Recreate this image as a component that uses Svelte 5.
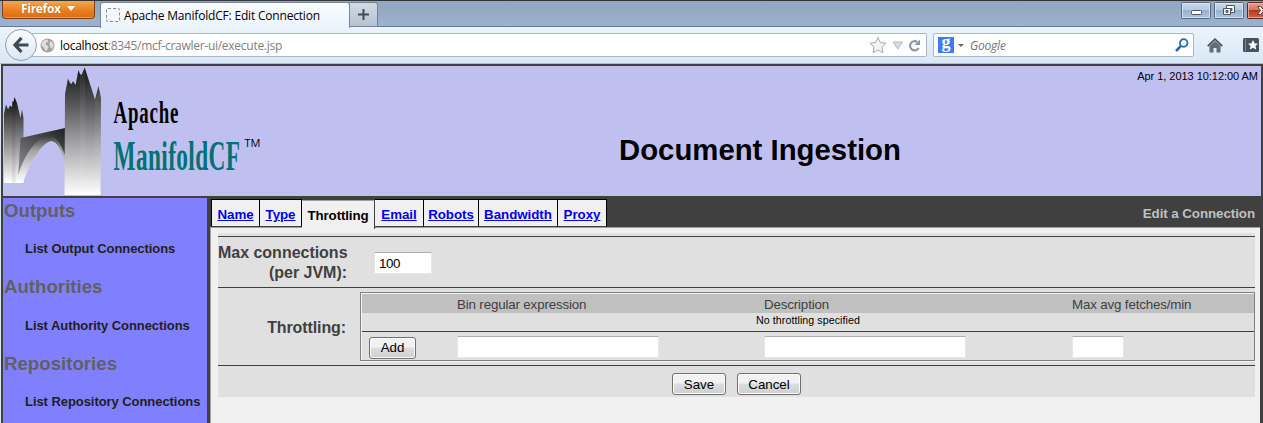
<script>
  const menu = [
    ['Outputs', 'List Output Connections'],
    ['Authorities', 'List Authority Connections'],
    ['Repositories', 'List Repository Connections']
  ];
  const tabs = [
    ['Name', 49], ['Type', 42], ['Throttling', 73], ['Email', 49],
    ['Robots', 55], ['Bandwidth', 79], ['Proxy', 49]
  ];
  const active = 'Throttling';
  let maxConnections = '100';
</script>

<div class="window">
  <header class="titlebar">
    <div class="firefox"><span>Firefox</span><i></i></div>
    <div class="browser-tab"><i></i><span>Apache ManifoldCF: Edit Connection</span></div>
    <div class="new-tab"><svg width="11" height="11" viewBox="0 0 11 11"><path d="M5.500 0v11M0 5.500h11" stroke="#3f4c5a" stroke-width="2" /></svg></div>
    <div class="controls">
      <svg width="103" height="26" viewBox="1160 0 103 26">
        <defs>
          <linearGradient id="glass" x1="0" y1="0" x2="0" y2="1"><stop offset="0" stop-color="#c9d9eb" /><stop offset=".45" stop-color="#b5cae1" /><stop offset=".5" stop-color="#97b2d0" /><stop offset="1" stop-color="#a9c6e2" /></linearGradient>
          <linearGradient id="close" x1="0" y1="0" x2="0" y2="1"><stop offset="0" stop-color="#e3a397" /><stop offset=".45" stop-color="#d57562" /><stop offset=".5" stop-color="#bd3519" /><stop offset="1" stop-color="#cf6950" /></linearGradient>
        </defs>
        <g stroke="#596b82">
          <rect x="1181.500" y="2.500" width="29" height="16" rx="1" fill="url(#glass)" />
          <rect x="1214.500" y="2.500" width="29" height="16" rx="1" fill="url(#glass)" />
          <path d="M1182.500 3.500h27v14h-27zM1215.500 3.500h27v14h-27z" fill="none" stroke="#dbe7f3" stroke-opacity=".8" />
          <rect x="1247.500" y="2.500" width="20" height="16" rx="1" fill="url(#close)" stroke="#5d2426" />
          <path d="M1263 3.500h-14.500v14H1263" fill="none" stroke="#efc0b6" stroke-opacity=".7" />
        </g>
        <rect x="1191.500" y="10.500" width="10" height="4" rx="1" fill="#fff" stroke="#4d5363" />
        <path d="M1226.500 5.500h8v7h-8z" fill="#fff" stroke="#4d5363" />
        <path d="M1229 8.500h3v2h-3z" fill="#8aa2bd" stroke="#4d5363" />
        <path d="M1223.500 8.500h7v6h-7z" fill="#fff" stroke="#4d5363" />
        <path d="M1226 10.500h2v2h-2z" fill="#8aa2bd" stroke="#4d5363" />
        <path d="M1257.500 6.500h3l2.500 2.500v3l-2.500 2.500h-3l3-4z" fill="#fff" stroke="#5d414b" />
      </svg>
    </div>
  </header>

  <nav class="toolbar">
    <div class="back"><svg width="16" height="16" viewBox="0 0 16 16"><path d="M8.500 1L2 8l6.500 7M2.500 8H15.500" fill="none" stroke="#404b59" stroke-width="3.200" /></svg></div>
    <div class="url">
      <svg class="globe" width="15" height="15" viewBox="0 0 15 15"><circle cx="7.500" cy="7.500" r="7" fill="#a2a2a2" /><path d="M1.500 4.500l3-2.500 3-.5 1 2-2 1-1 2 2 1 1 2-2 3-1 1-1-3-3-3zM10 3l3 2 .5 3-1.500 3-2-2-.5-3z" fill="#dedede" /></svg>
      <span class="address"><b>localhost</b>:8345/mcf-crawler-ui/execute.jsp</span>
      <svg class="urlicons" width="54" height="20" viewBox="868 35 54 20">
        <path d="M878 37.500l2.400 5.100 5.600.7-4.100 3.900 1 5.600-4.900-2.800-4.900 2.800 1-5.600-4.100-3.900 5.600-.7z" fill="#f3f3f3" stroke="#aaa" />
        <path d="M893 42h9.500l-4.750 7z" fill="#d6dce8" stroke="#a6b0be" stroke-width=".8" />
        <path d="M918.700 48a4.600 4.600 0 1 1-1.400-6" fill="none" stroke="#8a97a8" stroke-width="2.100" /><path d="M920 39.500v5.500h-5.500z" fill="#8a97a8" />
      </svg>
    </div>
    <div class="search">
      <div class="google">g</div><i></i><em>Google</em>
      <svg width="14" height="14" viewBox="0 0 14 14"><circle cx="8.700" cy="5" r="3.800" fill="#eef6ff" stroke="#2f67a5" stroke-width="1.800" /><path d="M6 7.800L1 13" stroke="#2f67a5" stroke-width="2.600" /></svg>
    </div>
    <svg class="home" width="16" height="15" viewBox="0 0 16 15"><path d="M2.500 8L8 3l5.500 5v6.500h-4V10h-3v4.500h-4z" fill="#626d77" /><path d="M.7 8.200L8 1.200l7.300 7" fill="none" stroke="#45515e" stroke-width="1.700" /></svg>
    <svg class="bookmark" width="16" height="14" viewBox="0 0 16 14"><rect width="16" height="14" rx="1.500" fill="#47525f" /><path d="M2.500 1v12" stroke="#7a8794" /><path d="M10 2l1.500 3.300 3.500.4-2.600 2.300.8 3.600L10 9.800l-3.200 1.800.8-3.600L5 5.700l3.500-.4z" fill="#fff" /></svg>
  </nav>

  <main class="page">
    <section class="banner">
      <svg class="logo" width="270" height="130" viewBox="3 66 270 130">
        <defs>
          <linearGradient id="tall" gradientUnits="userSpaceOnUse" x1="0" y1="68" x2="0" y2="195"><stop stop-color="#161616" /><stop offset=".25" stop-color="#4e4e50" /><stop offset=".62" stop-color="#aaaaac" /><stop offset="1" stop-color="#fff" /></linearGradient>
          <linearGradient id="short" gradientUnits="userSpaceOnUse" x1="0" y1="98" x2="0" y2="183"><stop stop-color="#111" /><stop offset=".4" stop-color="#707073" /><stop offset="1" stop-color="#fff" /></linearGradient>
          <linearGradient id="span" x1=".9" y1="0" x2=".3" y2="1"><stop stop-color="#242424" /><stop offset="1" stop-color="#8e8e91" /></linearGradient>
          <linearGradient id="arch" gradientUnits="userSpaceOnUse" x1="0" y1="136" x2="0" y2="182"><stop stop-color="#3d3d40" /><stop offset=".3" stop-color="#a0a0a3" /><stop offset="1" stop-color="#fff" /></linearGradient>
        </defs>
        <path d="M4 183V114L6 104.500 8 109.500 10 105.500 12 107 12.500 101 13.500 102 14.500 97 17 103 20.500 118 22 109.500 23.500 118V183z" fill="url(#short)" />
        <path d="M12 101h3.500v82H12z" fill="#000" opacity=".07" />
        <path d="M20.500 138L65 128v33c-3-12-8-20-14-20-12 0-20 22-33 38z" fill="url(#span)" />
        <path d="M17 179C24 154 37 136 49 136c8 0 12 9 16 19v7c-4-12-8-21-13-21-9 0-22 21-29 42h-6z" fill="url(#arch)" />
        <path d="M64.500 195L65 94 68 78.500 70 83 71.500 84 73 81 75.500 85 78.500 70 80 74 81.500 75 84.700 67.500 95 99.500 98.500 86 101 98 100.500 195z" fill="url(#tall)" />
        <path d="M80 74v121h5V67zM95 99v96h5.500V92z" fill="#fff" opacity=".05" />
        <g class="logotype">
          <text transform="translate(113.500 123) scale(.59 1)" font-size="32" textLength="110" lengthAdjust="spacing">Apache</text>
          <text transform="translate(113.500 169.500) scale(.555 1)" font-size="42" fill="#007272" textLength="228" lengthAdjust="spacing">ManifoldCF</text>
        </g>
        <text class="tm" x="244.500" y="147" textLength="16" lengthAdjust="spacingAndGlyphs">TM</text>
      </svg>
      <h1>Document Ingestion</h1>
      <time>Apr 1, 2013 10:12:00 AM</time>
    </section>

    <div class="body">
      <aside>
        {#each menu as [title, link]}
          <h2>{title}</h2>
          <p>{link}</p>
        {/each}
      </aside>

      <section class="content">
        <div class="tabs">
          {#each tabs as [name, width]}
            <div class="tab" class:active={name === active} style="width:{width}px"><span>{name}</span></div>
          {/each}
          <strong>Edit a Connection</strong>
        </div>
        <div class="panel">
          <div class="form">
            <div class="row connections">
              <label for="max">Max connections<br />(per JVM):</label>
              <input id="max" value={maxConnections} />
            </div>
            <div class="row throttling">
              <span class="label">Throttling:</span>
              <div class="bins">
                <div class="cols head"><span></span><span>Bin regular expression</span><span>Description</span><span>Max avg fetches/min</span></div>
                <div class="none">No throttling specified</div>
                <div class="cols add">
                  <button>Add</button><input class="wide" /><input class="wide" /><input class="small" />
                </div>
              </div>
            </div>
            <div class="row actions"><button class="save">Save</button><button class="cancel">Cancel</button></div>
          </div>
        </div>
      </section>
    </div>
  </main>
</div>

<style>
  :global(body) { margin: 0; overflow: hidden; }
  * { box-sizing: border-box; }
  .window { width: 1263px; height: 423px; overflow: hidden; background: #dce9f5; font-family: "Liberation Sans", Arial, sans-serif; }
  .titlebar { height: 27px; display: flex; border-top: 1px solid #343436; border-bottom: 1px solid #65788e; background: linear-gradient(#90a6c0, #98aac3 45%, #9bb3d1); font-family: "Open Sans", "Noto Sans", sans-serif; }
  .firefox { width: 93px; height: 18px; margin-left: 2px; display: flex; align-items: center; padding: 0 0 2px 18px; color: #fff; font-size: 12px; font-weight: 700; border: 1px solid #853f0c; border-top: 0; border-radius: 0 0 4px 4px; background: linear-gradient(#f3a94e, #e97f20 55%, #da6d13); box-shadow: inset 0 -1px #ed9a4e; text-shadow: 0 0 1px #8d4709; }
  .firefox span { width: 46px; letter-spacing: -.3px; }
  .firefox i { border: 4px solid transparent; border-top: 5px solid #fff; border-bottom: 0; }
  .browser-tab { width: 250px; height: 26px; margin: 1px 0 0 5px; padding: 0 0 1px 5px; display: flex; align-items: center; background: linear-gradient(#f9fcff, #ebf4fc); border: 1px solid #74879d; border-bottom: 0; border-radius: 3px 3px 0 0; font-size: 12px; letter-spacing: -.19px; white-space: nowrap; z-index: 1; }
  .browser-tab i { width: 14px; height: 14px; border: 1px dashed #8b8b8b; border-radius: 2px; margin-right: 4px; }
  .new-tab { width: 28px; height: 25px; margin-top: 1px; display: grid; place-items: center; border: 1px solid #72859b; border-left: 0; border-radius: 0 3px 0 0; background: linear-gradient(#d1dbe6, #b4c1d0); }
  .controls { margin-left: auto; height: 25px; margin-top: -1px; }
  .toolbar { height: 37px; display: flex; align-items: center; background: linear-gradient(#ebf4fc, #d9e7f5); border-bottom: 1px solid #aebccb; font-family: "Open Sans", "Noto Sans", sans-serif; font-size: 12px; }
  .back { flex: none; width: 32px; height: 32px; margin-left: 5px; display: grid; place-items: center; border: 1px solid #8da0b5; border-radius: 50%; background: linear-gradient(#fbfdff, #dce8f3); z-index: 1; }
  .url { width: 895px; height: 24px; margin-left: -5px; padding-left: 8px; display: flex; align-items: center; background: #fff; border: 1px solid #a7b9cc; border-left: 0; border-radius: 0 2px 2px 0; }
  .globe { margin-right: 5px; }
  .address { color: #808080; letter-spacing: -.27px; }
  .address b { color: #000; font-weight: 400; }
  .urlicons { margin-left: auto; margin-right: 4px; }
  .search { width: 261px; height: 24px; margin-left: 6px; padding: 0 4px; display: flex; align-items: center; background: #fff; border: 1px solid #a7b9cc; border-radius: 2px; }
  .google { width: 16px; height: 16px; background: #4079f5; color: #fff; text-align: center; font: bold 18px/11px "Liberation Serif", serif; }
  .search i { margin: 0 6px 0 4px; border: 3px solid transparent; border-top: 3px solid #666; border-bottom: 0; }
  .search em { color: #737373; letter-spacing: -.2px; }
  .search svg { margin-left: auto; }
  .home { margin-left: 13px; }
  .bookmark { margin-left: 20px; }
  .page { height: 359px; margin-left: 1px; border: 2px solid #404040; border-bottom: 0; }
  .banner { height: 130px; display: flex; background: #c0c0f0; }
  .logo { flex: none; }
  .logotype { font-family: "Liberation Serif", serif; font-weight: bold; }
  .tm { font: 11px "Open Sans", sans-serif; }
  h1 { flex: none; width: 282px; margin: 68px 0 0 346px; font-size: 29.33px; line-height: 32px; height: 32px; white-space: nowrap; }
  time { margin: 4px 3px 0 auto; font-size: 11px; letter-spacing: -.04px; line-height: 13px; white-space: nowrap; }
  .body { height: 227px; display: flex; border-top: 2px solid #404040; background: #404040; }
  aside { width: 204px; padding: 0 0 0 1px; background: #8080ff; overflow: hidden; }
  h2 { height: 24px; margin: 0; font-size: 18.67px; line-height: 26px; color: #606060; }
  aside p { height: 52.3px; margin: 0; padding: 18.4px 0 0 21px; font-size: 13px; letter-spacing: -.06px; font-weight: bold; line-height: 18px; color: #202020; white-space: nowrap; }
  .content { width: 1050px; margin-left: 3px; padding-top: 1px; }
  .tabs { height: 28px; display: flex; padding-left: 1px; background: #404040; position: relative; }
  .tab { height: 28px; display: flex; justify-content: center; padding-top: 7px; border: 1px solid #000; border-left-width: 0; background: #f0f0f0; font-size: 13.33px; letter-spacing: -.04px; font-weight: bold; line-height: 16px; border-bottom-color: #404040; }
  .tab:first-child { border-left-width: 1px; }
  .tab span { color: #0000ee; text-decoration: underline; }
  .tab.active { margin-top: 1px; height: 29px; border-color: #a0a0a0; border-bottom: 0; border-right-color: #404040; letter-spacing: -.12px; }
  .tab.active span { color: #000; text-decoration: none; }
  .tabs strong { margin: 7px 5px 0 auto; color: #c0c0c0; font-size: 13.33px; letter-spacing: -.06px; line-height: 16px; }
  .panel { height: 196px; padding: 5px 0 0 7px; border-left: 1px solid #a0a0a0; border-top: 1px solid #a0a0a0; background: #f0f0f0; }
  .form { width: 1037px; height: 164px; padding-top: 3px; background: #e0e0e0; color: #404040; }
  .row { border-top: 1px solid #404040; display: flex; align-items: center; }
  .connections { height: 51px; }
  label { width: 129px; padding-top: 2px; text-align: right; font-size: 16px; letter-spacing: -.02px; font-weight: bold; line-height: 20px; white-space: nowrap; }
  .connections input { width: 58px; margin: 2px 0 0 27px; }
  .throttling { height: 78px; }
  .label { width: 128px; margin: 2px 14px 0 0; text-align: right; font-size: 16px; letter-spacing: -.1px; font-weight: bold; }
  .bins { width: 895px; height: 69px; margin-top: -1px; border: 1px solid #808080; box-shadow: inset 1px 1px #f4f4f4, 0 1px #f4f4f4; padding: 1px 0 0 1px; }
  .cols { display: grid; grid-template-columns: 95px 307px 308px 1fr; align-items: center; }
  .head { height: 19px; line-height: 19px; background: #c0c0c0; font-size: 13.33px; letter-spacing: -.15px; padding-top: 1px; }
  .none { height: 19px; font-size: 10.67px; letter-spacing: .06px; line-height: 14px; text-align: center; color: #000; border-bottom: 1px solid #404040; }
  .add { height: 28px; padding-top: 2px; }
  input { height: 22px; padding: 1px 4px; border: 1px solid #e3e6ed; border-top-color: #abadb3; border-radius: 1px; background: #fff; font: 13.33px "Liberation Sans", sans-serif; letter-spacing: -.4px; color: #000; outline: 0; }
  .wide { width: 202px; }
  .small { width: 52px; }
  button { height: 22px; padding: 0; color: #000; border: 1px solid #707070; border-radius: 3px; background: linear-gradient(#f2f2f2 45%, #dddddd 50%, #cfcfcf); box-shadow: inset 0 0 0 1px #fbfbfb; font: 13.33px "Liberation Sans", sans-serif; }
  .add button { width: 47px; margin-left: 7px; margin-top: 2px; }
  .actions { height: 31px; padding-left: 454px; padding-top: 6px; }
  .save { width: 54px; }
  .cancel { width: 64px; margin-left: 11px; }
</style>
